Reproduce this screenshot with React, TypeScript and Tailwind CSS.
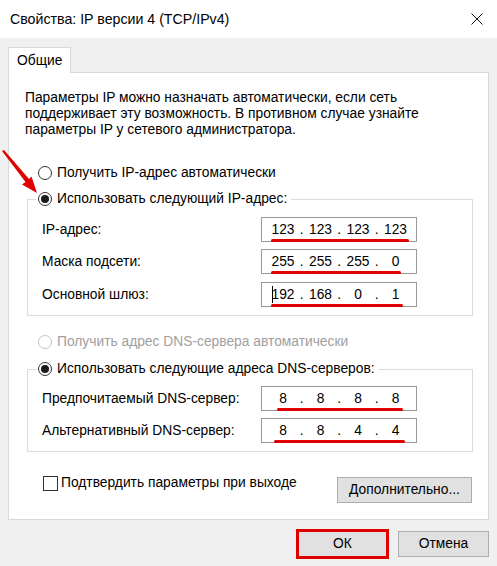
import React from 'react';

const Radio = ({ checked, disabled }: { checked?: boolean; disabled?: boolean }) => (
  <span
    className={`w-[14px] h-[14px] rounded-full border bg-white flex items-center justify-center shrink-0 ${
      disabled ? 'border-[#c4c4c4]' : 'border-[#333333]'
    }`}
  >
    {checked && <span className="w-[8px] h-[8px] rounded-full bg-[#1a1a1a]" />}
  </span>
);

type Mark = { left: number; width: number };

// поле ввода IP — четыре октета через точки
const IpField = ({ parts, mark, caret }: { parts: string[]; mark: Mark; caret?: boolean }) => (
  <div className="relative w-[156px] h-[25px] border border-[#9a9a9a] bg-white flex items-center pl-[6px]">
    {parts.map((p, i) => (
      <React.Fragment key={i}>
        <span className="w-[30px] text-center">{p}</span>
        {i < 3 && <span className="w-[7.5px] text-center">.</span>}
      </React.Fragment>
    ))}
    {caret && <span className="absolute left-[10px] top-[3px] w-px h-[17px] bg-black" />}
    <span
      className="absolute bottom-[-1px] h-[3px] rounded-full bg-[#e00000]"
      style={{ left: mark.left, width: mark.width }}
    />
  </div>
);

const Row = ({
  label,
  parts,
  mark,
  caret,
  className = '',
}: {
  label: string;
  parts: string[];
  mark: Mark;
  caret?: boolean;
  className?: string;
}) => (
  <div className={`flex items-center h-[25px] ml-[6px] ${className}`}>
    <span className="w-[219px]">{label}</span>
    <IpField parts={parts} mark={mark} caret={caret} />
  </div>
);

export default function App() {
  return (
    <div className="relative w-[497px] h-[566px] bg-[#f0f0f0] overflow-hidden text-[13.8px] leading-[16px] text-black font-['Liberation_Sans','Noto_Sans',sans-serif]">
      {/* Заголовок окна */}
      <div className="h-[38px] bg-white flex items-center justify-between pl-[10px] pr-[14px]">
        <span className="text-[14.2px]">Свойства: IP версии 4 (TCP/IPv4)</span>
        <svg width="12" height="12" viewBox="0 0 12 12">
          <path d="M0.5 0.5 L11.5 11.5 M11.5 0.5 L0.5 11.5" stroke="#111" strokeWidth="1" />
        </svg>
      </div>

      <div className="px-[8px] pt-[9px]">
        {/* Вкладка */}
        <div className="relative z-10 w-[63px] h-[26px] border border-b-0 border-[#d9d9d9] bg-white flex items-center pl-[8px]">
          Общие
        </div>

        <div className="-mt-px h-[448px] border border-[#d9d9d9] bg-white pt-[17px] pl-[16px]">
          <p>
            Параметры IP можно назначать автоматически, если сеть
            <br />
            поддерживает эту возможность. В противном случае узнайте
            <br />
            параметры IP у сетевого администратора.
          </p>

          <div className="mt-[27px] ml-[13px] h-[16px] flex items-center gap-[5px]">
            <Radio />
            <span>Получить IP-адрес автоматически</span>
          </div>

          <fieldset className="mt-[10px] ml-[2px] w-[446px] border border-[#dcdcdc] pl-[8px] pr-0 pb-[8px]">
            <legend className="px-[2px] h-[16px] flex items-center gap-[5px] bg-white">
              <Radio checked />
              <span className="pr-[2px]">Использовать следующий IP-адрес:</span>
            </legend>
            <div className="pt-[10px]">
              <Row label="IP-адрес:" parts={['123', '123', '123', '123']} mark={{ left: 9, width: 138 }} />
              <Row label="Маска подсети:" parts={['255', '255', '255', '0']} mark={{ left: 9, width: 130 }} className="mt-[7px]" />
              <Row label="Основной шлюз:" parts={['192', '168', '0', '1']} mark={{ left: 9, width: 132 }} caret className="mt-[8px]" />
            </div>
          </fieldset>

          <div className="mt-[18px] ml-[13px] h-[16px] flex items-center gap-[5px] text-[#a0a0a0]">
            <Radio disabled />
            <span>Получить адрес DNS-сервера автоматически</span>
          </div>

          <fieldset className="mt-[11px] ml-[2px] w-[446px] border border-[#dcdcdc] pl-[8px] pr-0 pb-[8px]">
            <legend className="px-[2px] h-[16px] flex items-center gap-[5px] bg-white">
              <Radio checked />
              <span className="pr-[2px]">Использовать следующие адреса DNS-серверов:</span>
            </legend>
            <div className="pt-[9px]">
              <Row label="Предпочитаемый DNS-сервер:" parts={['8', '8', '8', '8']} mark={{ left: 15, width: 126 }} />
              <Row label="Альтернативный DNS-сервер:" parts={['8', '8', '4', '4']} mark={{ left: 12, width: 131 }} className="mt-[7px]" />
            </div>
          </fieldset>

          <div className="mt-[23px] ml-[2px] w-[446px] pr-[1px] flex items-start justify-between">
            <div className="ml-[16px] flex items-center gap-[3px]">
              <span className="w-[15px] h-[15px] border border-[#333333] bg-white" />
              <span>Подтвердить параметры при выходе</span>
            </div>
            <button className="mt-[2px] w-[135px] h-[26px] border border-[#adadad] bg-[#e1e1e1] flex items-center justify-center">
              Дополнительно...
            </button>
          </div>
        </div>
      </div>

      {/* Кнопки диалога */}
      <div className="mt-[9px] pr-[8px] flex items-center justify-end gap-[9px]">
        <button className="w-[93px] h-[30px] border-[3px] border-[#e00000] bg-[#e1e1e1] flex items-center justify-center">
          ОК
        </button>
        <button className="w-[91px] h-[26px] border border-[#adadad] bg-[#e1e1e1] flex items-center justify-center">
          Отмена
        </button>
      </div>

      {/* Красная стрелка */}
      <svg className="absolute left-0 top-[145px]" width="45" height="55" viewBox="0 0 45 55">
        <polygon points="2,6 4,5 29,34 31.5,31.5 37,48 22,39.5 25.5,37" fill="#e00000" />
      </svg>
    </div>
  );
}
